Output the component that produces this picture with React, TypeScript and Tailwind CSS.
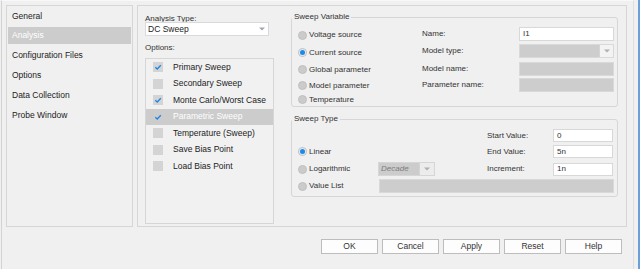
import React from 'react';

const navItems = ['General', 'Analysis', 'Configuration Files', 'Options', 'Data Collection', 'Probe Window'];

const options = [
  { label: 'Primary Sweep', checked: true },
  { label: 'Secondary Sweep', checked: false },
  { label: 'Monte Carlo/Worst Case', checked: true },
  { label: 'Parametric Sweep', checked: true, selected: true },
  { label: 'Temperature (Sweep)', checked: false },
  { label: 'Save Bias Point', checked: false },
  { label: 'Load Bias Point', checked: false },
];

const arial = "font-['Liberation_Sans',Arial,sans-serif]";
const ui = "font-['Liberation_Sans',Arial,sans-serif]";

function Caret({ color = '#9b9b9b' }: { color?: string }) {
  return (
    <svg width="6" height="4" viewBox="0 0 6 4">
      <path d="M0 0.5 H6 L3 3.5 Z" fill={color} />
    </svg>
  );
}

function Radio({ label, checked = false }: { label: string; checked?: boolean }) {
  return (
    <div className="flex items-center gap-[2px]">
      <span className="w-[9px] h-[9px] rounded-full bg-[#cbcbcb] border border-[#c0c0c0] flex items-center justify-center">
        {checked && <span className="w-[5px] h-[5px] rounded-full bg-[#1b8af0] ring-1 ring-[#e6e6e6]" />}
      </span>
      <span>{label}</span>
    </div>
  );
}

function TextBox({ value, width }: { value?: string; width: string }) {
  return (
    <div className={`${width} h-[14px] bg-white border border-[#d8d8d8] pl-[3px] flex items-center text-[#333]`}>
      {value}
    </div>
  );
}

function DisabledBox({ width }: { width: string }) {
  return <div className={`${width} h-[14px] bg-[#cdcdcd] border border-[#d9d9d9]`} />;
}

export default function App() {
  return (
    <div className="w-[640px] h-[269px] overflow-hidden bg-[#f0f0f0] border-r-2 border-r-[#6b9fd9]">
      <div className={`ml-[1px] w-[633px] h-[269px] border-l border-l-[#d3d3d3] border-r border-r-[#dedede] border-t border-t-[#f8f8f8] ${ui} text-[8px] text-[#333]`}>
        <div className="flex mt-[4px]">
          {/* left navigation */}
          <div className={`ml-[4px] w-[127px] h-[222px] border border-[#d6d6d6] px-[1px] pt-[1.5px] flex flex-col gap-[2.8px] ${arial} text-[8.5px]`}>
            {navItems.map((item) => (
              <div
                key={item}
                className={`h-[17px] pl-[4px] flex items-center ${item === 'Analysis' ? 'bg-[#cccccc] text-white' : 'text-[#222]'}`}
              >
                {item}
              </div>
            ))}
          </div>

          {/* main panel */}
          <div className="ml-[4px] w-[490px] h-[222px] border border-[#d6d6d6] flex">
            <div className="ml-[7px] w-[129px] flex flex-col">
              <div className="h-[16px] pt-[8px] leading-[10px]">Analysis Type:</div>
              <div className={`w-[124px] h-[14px] bg-white border border-[#dadada] pl-[2px] pr-[3px] flex items-center justify-between ${arial} text-[8.5px] text-[#222]`}>
                <span>DC Sweep</span>
                <Caret color="#a0a6b0" />
              </div>
              <div className="h-[22px] pt-[7px] leading-[10px]">Options:</div>
              <div className={`w-[129px] h-[166px] border border-[#d6d6d6] bg-[#f1f1f1] ${arial} text-[8.5px]`}>
                {options.map((o) => (
                  <div
                    key={o.label}
                    className={`h-[16.5px] pl-[7px] flex items-center gap-[10px] ${o.selected ? 'bg-[#cccccc] text-white' : 'text-[#222]'}`}
                  >
                    <span className={`w-[10px] h-[10px] flex items-center justify-center ${o.selected ? 'bg-[#cccccc]' : 'bg-[#d4d4d4]'}`}>
                      {o.checked && (
                        <svg width="8" height="8" viewBox="0 0 8 8">
                          <path d="M1.3 4.3 L3.2 6 L6.8 2.2" fill="none" stroke="#1a86e8" strokeWidth="1.3" />
                        </svg>
                      )}
                    </span>
                    <span>{o.label}</span>
                  </div>
                ))}
              </div>
            </div>

            <div className="ml-[17px] w-[327px] flex flex-col">
              {/* Sweep Variable */}
              <fieldset className="mt-[6px] border border-[#d6d6d6] rounded-[3px] pt-[4px]">
                <legend className="px-[2px] leading-[10px]">Sweep Variable</legend>
                <div className="flex">
                  <div className="w-[130px] pl-[6px] flex flex-col">
                    <div className="h-[18px] flex items-center"><Radio label="Voltage source" /></div>
                    <div className="h-[17.5px] flex items-center"><Radio label="Current source" checked /></div>
                    <div className="h-[16.5px] flex items-center"><Radio label="Global parameter" /></div>
                    <div className="h-[15px] flex items-center"><Radio label="Model parameter" /></div>
                    <div className="h-[13px] flex items-center"><Radio label="Temperature" /></div>
                  </div>
                  <div className="flex flex-col pt-[1px]">
                    <div className="h-[14px] flex items-center">
                      <span className="w-[97px]">Name:</span>
                      <TextBox value="I1" width="w-[95px]" />
                    </div>
                    <div className="mt-[3px] h-[14px] flex items-center">
                      <span className="w-[97px]">Model type:</span>
                      <div className="w-[95px] h-[14px] bg-[#cdcdcd] border border-[#d9d9d9] flex justify-end">
                        <div className="w-[14px] h-full bg-[#f3f3f3] border-l border-[#d4d4d4] flex items-center justify-center">
                          <Caret color="#b0b0b0" />
                        </div>
                      </div>
                    </div>
                    <div className="mt-[4px] h-[14px] flex items-center">
                      <span className="w-[97px]">Model name:</span>
                      <DisabledBox width="w-[95px]" />
                    </div>
                    <div className="mt-[2px] h-[14px] flex items-center">
                      <span className="w-[97px]">Parameter name:</span>
                      <DisabledBox width="w-[95px]" />
                    </div>
                  </div>
                </div>
              </fieldset>

              {/* Sweep Type */}
              <fieldset className="mt-[7px] border border-[#d6d6d6] rounded-[3px] pb-[3px]">
                <legend className="px-[2px] leading-[10px]">Sweep Type</legend>
                <div className="mt-[5px] h-[13px] flex items-center pr-[4px]">
                  <div className="flex-1" />
                  <span className="w-[66px]">Start Value:</span>
                  <div className="w-[60px] h-[13px] bg-white border border-[#d8d8d8] pl-[3px] flex items-center">0</div>
                </div>
                <div className="mt-[3px] h-[13px] flex items-center pr-[4px]">
                  <div className="w-[86px] pl-[6px]"><Radio label="Linear" checked /></div>
                  <div className="flex-1" />
                  <span className="w-[66px]">End Value:</span>
                  <div className="w-[60px] h-[13px] bg-white border border-[#d8d8d8] pl-[3px] flex items-center">5n</div>
                </div>
                <div className="mt-[4px] h-[14px] flex items-center pr-[4px]">
                  <div className="w-[86px] pl-[6px]"><Radio label="Logarithmic" /></div>
                  <div className="w-[57px] h-[14px] bg-[#cccccc] border border-[#d6d6d6] flex">
                    <span className="flex-1 pl-[2px] italic text-[#7c7c7c] flex items-center">Decade</span>
                    <div className="w-[15px] h-full bg-[#ececec] border-l border-[#d4d4d4] flex items-center justify-center">
                      <Caret color="#b0b0b0" />
                    </div>
                  </div>
                  <div className="flex-1" />
                  <span className="w-[66px]">Increment:</span>
                  <div className="w-[60px] h-[13px] bg-white border border-[#d8d8d8] pl-[3px] flex items-center">1n</div>
                </div>
                <div className="mt-[3px] h-[14px] flex items-center pr-[3px]">
                  <div className="w-[87px] pl-[6px]"><Radio label="Value List" /></div>
                  <div className="flex-1 h-[14px] bg-[#cdcdcd] border border-[#d9d9d9]" />
                </div>
              </fieldset>
            </div>
          </div>
        </div>

        {/* dialog buttons */}
        <div className="mt-[12px] ml-[319px] flex gap-[4px]">
          {['OK', 'Cancel', 'Apply', 'Reset', 'Help'].map((b) => (
            <button
              key={b}
              className="w-[57px] h-[15px] bg-[#fdfdfd] border border-[#bdbdbd] text-[8.5px] text-[#333] flex items-center justify-center"
            >
              {b}
            </button>
          ))}
        </div>
      </div>
    </div>
  );
}
